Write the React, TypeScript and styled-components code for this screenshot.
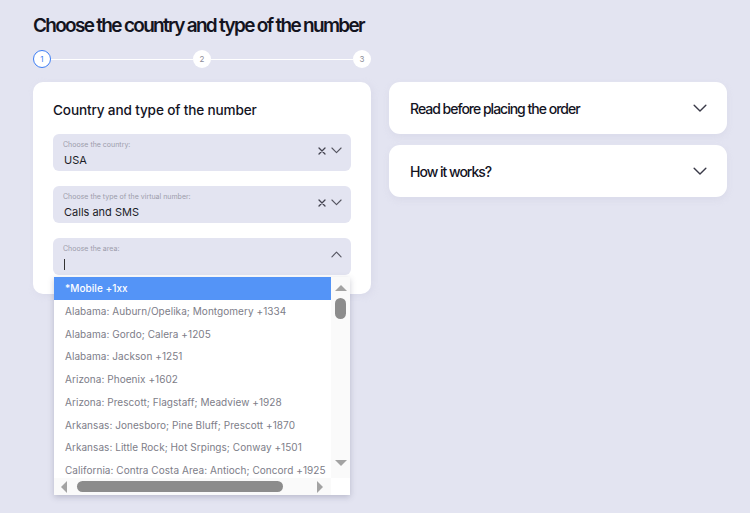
import React from 'react';
import styled, { createGlobalStyle } from 'styled-components';

const GlobalStyle = createGlobalStyle`
  html, body {
    margin: 0;
    padding: 0;
    background: #e3e4f1;
    font-family: Inter, "Noto Sans", sans-serif;
    color: #14141f;
  }
  #root {
    min-height: 100vh;
  }
`;

const Page = styled.div`
  box-sizing: border-box;
  min-height: 100vh;
  padding: 14px 23px 0 33px;
`;

const Title = styled.h1`
  margin: 0;
  font-size: 19px;
  line-height: 24px;
  font-weight: 600;
  letter-spacing: -1.7px;
`;

const Columns = styled.div`
  display: grid;
  grid-template-columns: 338px 338px;
  gap: 18px;
  margin-top: 12px;
`;

const LeftCol = styled.div`
  display: flex;
  flex-direction: column;
`;

const RightCol = styled.div`
  display: flex;
  flex-direction: column;
  gap: 11px;
  padding-top: 32px;
`;

const Stepper = styled.div`
  display: flex;
  align-items: center;
  height: 18px;
`;

const StepDot = styled.div<{ $active?: boolean }>`
  width: 18px;
  height: 18px;
  box-sizing: border-box;
  border-radius: 50%;
  background: #fff;
  border: ${(p) => (p.$active ? '1.5px solid #3d7ef5' : 'none')};
  color: ${(p) => (p.$active ? '#3d7ef5' : '#8d8d98')};
  font-size: 8px;
  display: flex;
  align-items: center;
  justify-content: center;
  flex-shrink: 0;
`;

const StepLine = styled.div`
  flex: 1;
  height: 1px;
  background: #fff;
`;

const Card = styled.div`
  position: relative;
  margin-top: 14px;
  background: #fff;
  border-radius: 10px;
  padding: 19px 20px 19px 20px;
  box-shadow: 2px 2px 6px rgba(200, 200, 220, 0.35);
`;

const CardTitle = styled.h2`
  margin: 0 0 15px;
  font-size: 13.6px;
  line-height: 18px;
  font-weight: 500;
  letter-spacing: -0.15px;
`;

const Fields = styled.div`
  display: flex;
  flex-direction: column;
  gap: 15px;
`;

const Field = styled.div`
  position: relative;
  height: 37px;
  background: #e3e4f1;
  border-radius: 6px;
  display: flex;
  align-items: center;
  padding: 0 9px 0 10px;
`;

const FieldBody = styled.div`
  flex: 1;
  display: flex;
  flex-direction: column;
  padding-top: 1px;
`;

const FieldLabel = styled.span`
  font-size: 7px;
  line-height: 9px;
  color: #9c9cab;
`;

const FieldValue = styled.span`
  font-size: 11px;
  line-height: 14px;
  margin-top: 4px;
  margin-left: 1px;
  color: #1d1d28;
`;

const Caret = styled.span`
  display: block;
  width: 1px;
  height: 11px;
  margin-top: 6px;
  margin-left: 1px;
  background: #333;
`;

const FieldIcons = styled.div`
  display: flex;
  align-items: center;
  gap: 5px;
  color: #555560;
  margin-top: -4px;
`;

const Dropdown = styled.div`
  position: absolute;
  left: 1px;
  right: 1px;
  top: calc(100% + 2px);
  height: 218px;
  background: #fff;
  box-shadow: 0 2px 6px rgba(60, 60, 90, 0.25);
  display: grid;
  grid-template-columns: 1fr 19px;
  grid-template-rows: 1fr 17px;
  overflow: hidden;
  z-index: 20;
`;

const List = styled.div`
  overflow: hidden;
`;

const Option = styled.div<{ $selected?: boolean }>`
  height: 22.75px;
  line-height: 22.75px;
  padding-left: 11px;
  white-space: nowrap;
  font-size: 10px;
  letter-spacing: 0.05px;
  color: ${(p) => (p.$selected ? '#fff' : '#7d7d88')};
  background: ${(p) => (p.$selected ? '#5494f7' : 'transparent')};
  font-weight: ${(p) => (p.$selected ? 500 : 400)};
`;

const VScroll = styled.div`
  background: #fafafa;
  display: flex;
  flex-direction: column;
  align-items: center;
  padding: 8px 0 0;
`;

const VThumb = styled.div`
  width: 11px;
  height: 21px;
  border-radius: 6px;
  background: #8c8c8c;
  margin-top: 7px;
`;

const Spacer = styled.div`
  flex: 1;
`;

const HScroll = styled.div`
  background: #fafafa;
  display: flex;
  align-items: center;
  padding: 0 8px 0 7px;
`;

const HThumb = styled.div`
  width: 206px;
  height: 11px;
  border-radius: 6px;
  background: #8c8c8c;
  margin-left: 10px;
`;

const Corner = styled.div`
  background: #fff;
`;

const Arrow = styled.div<{ $dir: 'up' | 'down' | 'left' | 'right' }>`
  width: 0;
  height: 0;
  ${(p) =>
    p.$dir === 'up'
      ? 'border-left: 6px solid transparent; border-right: 6px solid transparent; border-bottom: 6px solid #a3a3a3;'
      : p.$dir === 'down'
      ? 'border-left: 6px solid transparent; border-right: 6px solid transparent; border-top: 6px solid #a3a3a3; margin-bottom: 12px;'
      : p.$dir === 'left'
      ? 'border-top: 6px solid transparent; border-bottom: 6px solid transparent; border-right: 6px solid #a3a3a3;'
      : 'border-top: 6px solid transparent; border-bottom: 6px solid transparent; border-left: 6px solid #a3a3a3;'}
`;

const InfoCard = styled.div`
  height: 52px;
  background: #fff;
  border-radius: 11px;
  display: flex;
  align-items: center;
  justify-content: space-between;
  padding: 0 20px 0 21px;
  box-shadow: 0 3px 6px rgba(200, 200, 220, 0.3);
`;

const InfoTitle = styled.span`
  font-size: 14px;
  font-weight: 500;
  letter-spacing: -1px;
  color: #14141f;
`;

const ChevronDown = ({ size = 11, color = '#555560' }: { size?: number; color?: string }) => (
  <svg width={size} height={size * 0.6} viewBox="0 0 12 7" fill="none">
    <path d="M1 1l5 5 5-5" stroke={color} strokeWidth="1.2" strokeLinecap="round" strokeLinejoin="round" />
  </svg>
);

const ChevronUp = () => (
  <svg width="11" height="7" viewBox="0 0 12 7" fill="none">
    <path d="M1 6l5-5 5 5" stroke="#555560" strokeWidth="1.2" strokeLinecap="round" strokeLinejoin="round" />
  </svg>
);

const Cross = () => (
  <svg width="8" height="8" viewBox="0 0 8 8" fill="none">
    <path d="M1 1l6 6M7 1L1 7" stroke="#444450" strokeWidth="1.3" strokeLinecap="round" />
  </svg>
);

const areas = [
  '*Mobile +1xx',
  'Alabama: Auburn/Opelika; Montgomery +1334',
  'Alabama: Gordo; Calera +1205',
  'Alabama: Jackson +1251',
  'Arizona: Phoenix +1602',
  'Arizona: Prescott; Flagstaff; Meadview +1928',
  'Arkansas: Jonesboro; Pine Bluff; Prescott +1870',
  'Arkansas: Little Rock; Hot Srpings; Conway +1501',
  'California: Contra Costa Area: Antioch; Concord +1925',
];

export default function App() {
  return (
    <>
      <GlobalStyle />
      <Page>
        <Title>Choose the country and type of the number</Title>
        <Columns>
          <LeftCol>
            <Stepper>
              <StepDot $active>1</StepDot>
              <StepLine />
              <StepDot>2</StepDot>
              <StepLine />
              <StepDot>3</StepDot>
            </Stepper>
            <Card>
              <CardTitle>Country and type of the number</CardTitle>
              <Fields>
                <Field>
                  <FieldBody>
                    <FieldLabel>Choose the country:</FieldLabel>
                    <FieldValue>USA</FieldValue>
                  </FieldBody>
                  <FieldIcons>
                    <Cross />
                    <ChevronDown />
                  </FieldIcons>
                </Field>
                <Field>
                  <FieldBody>
                    <FieldLabel>Choose the type of the virtual number:</FieldLabel>
                    <FieldValue>Calls and SMS</FieldValue>
                  </FieldBody>
                  <FieldIcons>
                    <Cross />
                    <ChevronDown />
                  </FieldIcons>
                </Field>
                <Field>
                  <FieldBody>
                    <FieldLabel>Choose the area:</FieldLabel>
                    <Caret />
                  </FieldBody>
                  <FieldIcons>
                    <ChevronUp />
                  </FieldIcons>
                  <Dropdown>
                    <List>
                      {areas.map((a, i) => (
                        <Option key={a} $selected={i === 0}>
                          {a}
                        </Option>
                      ))}
                    </List>
                    <VScroll>
                      <Arrow $dir="up" />
                      <VThumb />
                      <Spacer />
                      <Arrow $dir="down" />
                    </VScroll>
                    <HScroll>
                      <Arrow $dir="left" />
                      <HThumb />
                      <Spacer />
                      <Arrow $dir="right" />
                    </HScroll>
                    <Corner />
                  </Dropdown>
                </Field>
              </Fields>
            </Card>
          </LeftCol>
          <RightCol>
            <InfoCard>
              <InfoTitle>Read before placing the order</InfoTitle>
              <ChevronDown size={14} color="#3a3a48" />
            </InfoCard>
            <InfoCard>
              <InfoTitle>How it works?</InfoTitle>
              <ChevronDown size={14} color="#3a3a48" />
            </InfoCard>
          </RightCol>
        </Columns>
      </Page>
    </>
  );
}
